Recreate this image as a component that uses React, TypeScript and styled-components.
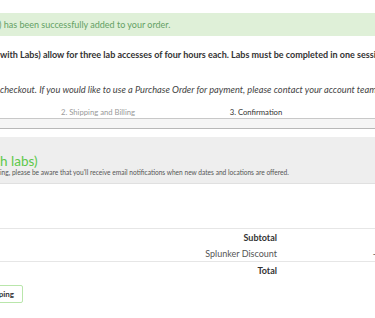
import React from "react";
import styled, { createGlobalStyle } from "styled-components";

const GlobalStyle = createGlobalStyle`
  body {
    margin: 0;
    background: #fff;
    overflow: hidden;
    font-family: Lato, "Open Sans", "Liberation Sans", sans-serif;
    color: #333;
  }
`;

const steps = ["1. Cart", "2. Shipping and Billing", "3. Confirmation"];

const totals = [
  { label: "Subtotal", value: "$1,500.00", strong: true },
  { label: "Splunker Discount", value: "- $1,500.00", strong: false },
  { label: "Total", value: "$0.00", strong: true, divider: true },
];

const App: React.FC = () => {
  return (
    <Page>
      <GlobalStyle />
      <Alert>) has been successfully added to your order.</Alert>
      <Notice>
        with Labs) allow for three lab accesses of four hours each. Labs must be
        completed in one session.
      </Notice>
      <Note>
        checkout. If you would like to use a Purchase Order for payment, please
        contact your account team.
      </Note>

      <Steps>
        {steps.map((step, i) => (
          <Step key={step} active={i === 2}>
            {step}
          </Step>
        ))}
      </Steps>
      <Progress />

      <Panel>
        <PanelTitle>h labs)</PanelTitle>
        <PanelText>
          ing, please be aware that you'll receive email notifications when new
          dates and locations are offered.
        </PanelText>
      </Panel>

      <Summary>
        {totals.map((row) => (
          <SummaryRow key={row.label} divider={row.divider}>
            <SummaryLabel strong={row.strong}>{row.label}</SummaryLabel>
            <SummaryValue strong={row.strong}>{row.value}</SummaryValue>
          </SummaryRow>
        ))}
      </Summary>

      <Actions>
        <OutlineButton>Continue Shopping</OutlineButton>
      </Actions>
    </Page>
  );
};

export default App;

const Page = styled.div`
  width: 375px;
  height: 318px;
  overflow: hidden;
  padding-top: 13px;
  box-sizing: border-box;
`;

const Alert = styled.div`
  height: 23px;
  line-height: 23px;
  background-color: #dff0d8;
  color: #64a064;
  font-size: 9px;
  text-indent: -1px;
  white-space: nowrap;
`;

const Notice = styled.p`
  margin: 13px 0 0;
  line-height: 12px;
  font-size: 9px;
  font-weight: bold;
  color: #333;
  white-space: nowrap;
`;

const Note = styled.p`
  margin: 23px 0 0;
  line-height: 12px;
  font-size: 9.25px;
  font-style: italic;
  color: #444;
  white-space: nowrap;
`;

const Steps = styled.div`
  display: grid;
  grid-template-columns: repeat(3, 158px);
  margin: 11px 0 0 -139px;
  line-height: 11px;
`;

const Step = styled.div<{ active?: boolean }>`
  text-align: center;
  font-size: 7.7px;
  color: ${(p) => (p.active ? "#333" : "#999")};
`;

const Progress = styled.div`
  height: 9px;
  background-color: #f5f5f5;
  border-top: 1px solid #c8c8c8;
  border-bottom: 1px solid #b8b8b8;
`;

const Panel = styled.div`
  margin-top: 8px;
  height: 47px;
  box-sizing: border-box;
  padding-top: 17px;
  background-color: #eeeeee;
  border-bottom: 1px solid #e0e0e0;
`;

const PanelTitle = styled.div`
  font-size: 13.5px;
  line-height: 14px;
  color: #5cc84a;
`;

const PanelText = styled.div`
  font-size: 6.6px;
  line-height: 9px;
  color: #555;
  white-space: nowrap;
`;

const Summary = styled.div`
  margin-top: 44px;
  border-top: 1px solid #e6e6e6;
`;

const SummaryRow = styled.div<{ divider?: boolean }>`
  display: grid;
  grid-template-columns: 277px 142px;
  height: 16px;
  align-items: center;
  border-top: ${(p) => (p.divider ? "1px solid #e6e6e6" : "none")};
`;

const SummaryLabel = styled.div<{ strong?: boolean }>`
  text-align: right;
  font-size: 9px;
  font-weight: ${(p) => (p.strong ? "bold" : "normal")};
  color: ${(p) => (p.strong ? "#333" : "#555")};
`;

const SummaryValue = styled(SummaryLabel)`
  white-space: pre;
`;

const Actions = styled.div`
  width: 23px;
  display: flex;
  justify-content: flex-end;
  margin-top: 7px;
`;

const OutlineButton = styled.button`
  flex-shrink: 0;
  height: 18px;
  padding: 0 8px;
  background: #fff;
  border: 1.5px solid #b9e6ab;
  border-radius: 2px;
  font-family: Lato, "Liberation Sans", sans-serif;
  font-size: 8px;
  font-weight: bold;
  color: #333;
`;
